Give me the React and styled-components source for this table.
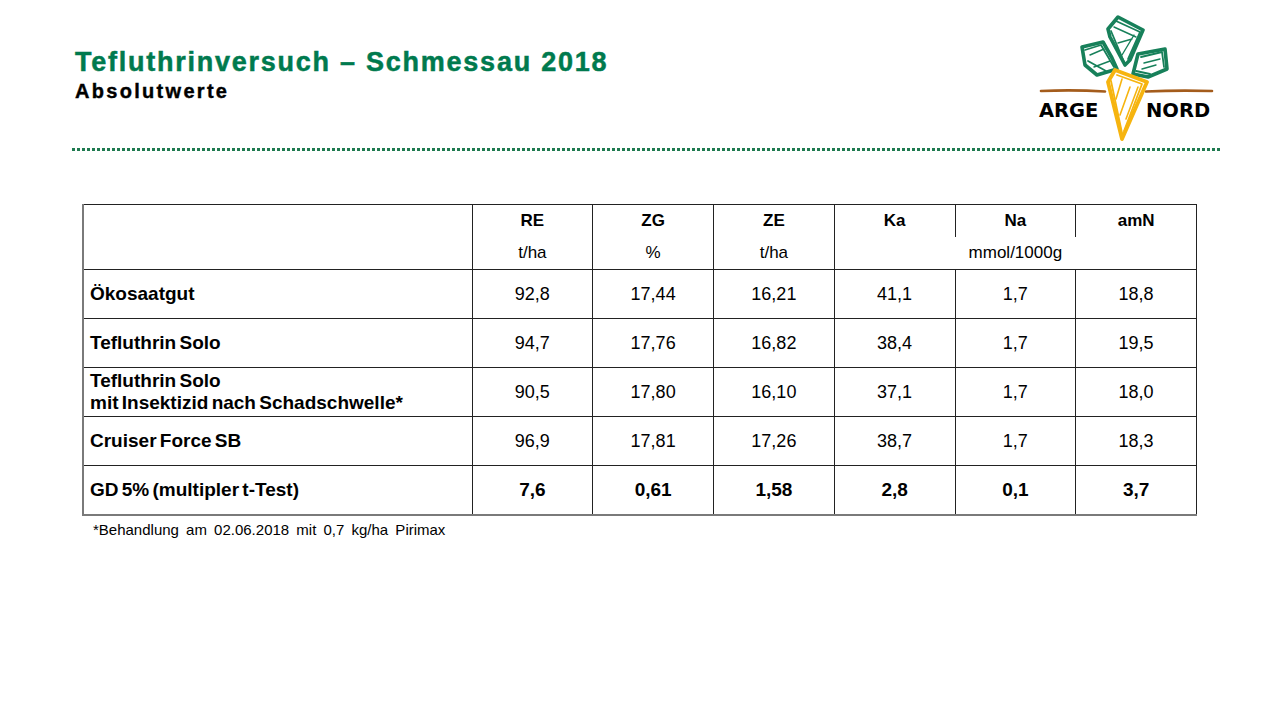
import React from 'react';
import styled, { createGlobalStyle } from 'styled-components';

const GlobalStyle = createGlobalStyle`
  html, body {
    margin: 0;
    padding: 0;
    background: #fff;
  }
  body {
    font-family: "Liberation Sans", Arial, sans-serif;
    color: #000;
  }
`;

const Page = styled.div`
  width: 1280px;
  height: 720px;
  background: #fff;
  overflow: hidden;
`;

const Header = styled.header`
  display: flex;
  justify-content: space-between;
  align-items: flex-start;
  height: 148px;
  padding: 0 66px 0 75px;
`;

const TitleBlock = styled.div`
  padding-top: 46px;
`;

const Title = styled.h1`
  margin: 0;
  font-size: 27px;
  line-height: 32px;
  font-weight: 700;
  color: #007a4e;
  letter-spacing: 1.75px;
  -webkit-text-stroke: 0.5px #007a4e;
`;

const Subtitle = styled.h2`
  margin: 0;
  font-size: 20px;
  line-height: 26px;
  font-weight: 700;
  letter-spacing: 2.3px;
  -webkit-text-stroke: 0.4px #000;
`;

const LogoWrap = styled.div`
  padding-top: 15px;
`;

const Divider = styled.div`
  margin: 0 60px 0 72px;
  height: 3px;
  background: repeating-linear-gradient(
    to right,
    #1f7a50 0,
    #1f7a50 3px,
    transparent 3px,
    transparent 5px
  );
`;

const TableWrap = styled.div`
  margin: 53px 0 0 82px;
  width: 1115px;
`;

const Table = styled.table`
  width: 100%;
  border-collapse: collapse;
  table-layout: fixed;
  font-size: 18px;
  border-left: 2px solid #7a7a7a;
  border-bottom: 2px solid #7a7a7a;
  border-top: 1px solid #222;
  border-right: 1px solid #222;
`;

const HeadCell = styled.th`
  height: 32px;
  padding: 0;
  text-align: center;
  font-weight: ${p => (p.$unit ? 400 : 700)};
  font-size: 17px;
  border-left: ${p => (p.$open ? 'none' : '1px solid #222')};
  vertical-align: middle;
`;

const Row = styled.tr`
  height: 49px;
  border-top: 1px solid #222;
`;

const Label = styled.td`
  padding: 0 0 0 6px;
  font-size: 19px;
  font-weight: 700;
  word-spacing: -2px;
  line-height: 22px;
`;

const Cell = styled.td`
  text-align: center;
  border-left: 1px solid #222;
  font-weight: ${p => (p.$bold ? 700 : 400)};
  font-size: ${p => (p.$bold ? '19px' : '18px')};
`;

const Footnote = styled.p`
  margin: 5px 0 0 11px;
  font-size: 15px;
  word-spacing: 3px;
`;

const Logo = () => (
  <svg width="176" height="126" viewBox="0 0 176 126">
    <g fill="none" stroke="#17805a" strokeWidth="3.6" strokeLinejoin="round" strokeLinecap="round">
      <path d="M80 2 L105 15 L92 45 L87 50 L72 22 L70 14 Z" />
      <path d="M78 6 L102 17 L90 44 M73 16 L86 47" strokeWidth="1.8" />
      <path d="M76 12 L98 22 M80 28 L94 24 M84 40 L96 20" strokeWidth="1.4" />
      <path d="M44 32 L65 27 L74 43 L79 54 L59 60 L47 50 Z" />
      <path d="M47 35 L63 30 L76 52 M50 46 L68 56" strokeWidth="1.8" />
      <path d="M52 40 L66 34 M56 52 L72 46" strokeWidth="1.4" />
      <path d="M100 39 L127 34 L129 54 L110 62 L95 59 Z" />
      <path d="M103 42 L124 37 L126 52 M98 56 L112 59" strokeWidth="1.8" />
      <path d="M106 48 L122 44 M104 54 L118 50" strokeWidth="1.4" />
    </g>
    <g stroke="#a45c1c" strokeWidth="2.6" strokeLinecap="round">
      <path d="M3 76 Q35 74.5 67 76.5" fill="none" />
      <path d="M108 76.5 Q140 75 174 76" fill="none" />
    </g>
    <g fill="none" stroke="#f6b40f" strokeWidth="3.8" strokeLinejoin="round" strokeLinecap="round">
      <path d="M77 55 L109 67 L84 124 L70 67 Z" />
      <path d="M79 60 L104 69 L86 116 M73 66 L84 118" strokeWidth="1.8" />
      <path d="M92 72 L82 100 M100 72 L88 104 M84 64 L78 84" strokeWidth="1.6" />
    </g>
    <g fontFamily='"DejaVu Sans", Verdana, sans-serif' fontWeight="700" fontSize="19.5" fill="#000">
      <text x="1" y="102">ARGE</text>
      <text x="108" y="102">NORD</text>
    </g>
  </svg>
);

const rows = [
  { label: ['Ökosaatgut'], values: ['92,8', '17,44', '16,21', '41,1', '1,7', '18,8'] },
  { label: ['Tefluthrin Solo'], values: ['94,7', '17,76', '16,82', '38,4', '1,7', '19,5'] },
  {
    label: ['Tefluthrin Solo', 'mit Insektizid nach Schadschwelle*'],
    values: ['90,5', '17,80', '16,10', '37,1', '1,7', '18,0'],
  },
  { label: ['Cruiser Force SB'], values: ['96,9', '17,81', '17,26', '38,7', '1,7', '18,3'] },
];

const gd = { label: 'GD 5% (multipler t-Test)', values: ['7,6', '0,61', '1,58', '2,8', '0,1', '3,7'] };

const App = () => (
  <Page>
    <GlobalStyle />
    <Header>
      <TitleBlock>
        <Title>Tefluthrinversuch – Schmessau 2018</Title>
        <Subtitle>Absolutwerte</Subtitle>
      </TitleBlock>
      <LogoWrap>
        <Logo />
      </LogoWrap>
    </Header>
    <Divider />
    <TableWrap>
      <Table>
        <colgroup>
          <col style={{ width: '389px' }} />
          <col />
          <col />
          <col />
          <col />
          <col />
          <col />
        </colgroup>
        <thead>
          <tr>
            <HeadCell rowSpan={2} $open />
            <HeadCell>RE</HeadCell>
            <HeadCell>ZG</HeadCell>
            <HeadCell>ZE</HeadCell>
            <HeadCell>Ka</HeadCell>
            <HeadCell>Na</HeadCell>
            <HeadCell>amN</HeadCell>
          </tr>
          <tr>
            <HeadCell $unit>t/ha</HeadCell>
            <HeadCell $unit>%</HeadCell>
            <HeadCell $unit>t/ha</HeadCell>
            <HeadCell $unit colSpan={3}>mmol/1000g</HeadCell>
          </tr>
        </thead>
        <tbody>
          {rows.map((r, i) => (
            <Row key={i}>
              <Label>
                {r.label.map((l, j) => (
                  <div key={j}>{l}</div>
                ))}
              </Label>
              {r.values.map((v, j) => (
                <Cell key={j}>{v}</Cell>
              ))}
            </Row>
          ))}
          <Row>
            <Label>{gd.label}</Label>
            {gd.values.map((v, j) => (
              <Cell key={j} $bold>
                {v}
              </Cell>
            ))}
          </Row>
        </tbody>
      </Table>
      <Footnote>*Behandlung am 02.06.2018 mit 0,7 kg/ha Pirimax</Footnote>
    </TableWrap>
  </Page>
);

export default App;
